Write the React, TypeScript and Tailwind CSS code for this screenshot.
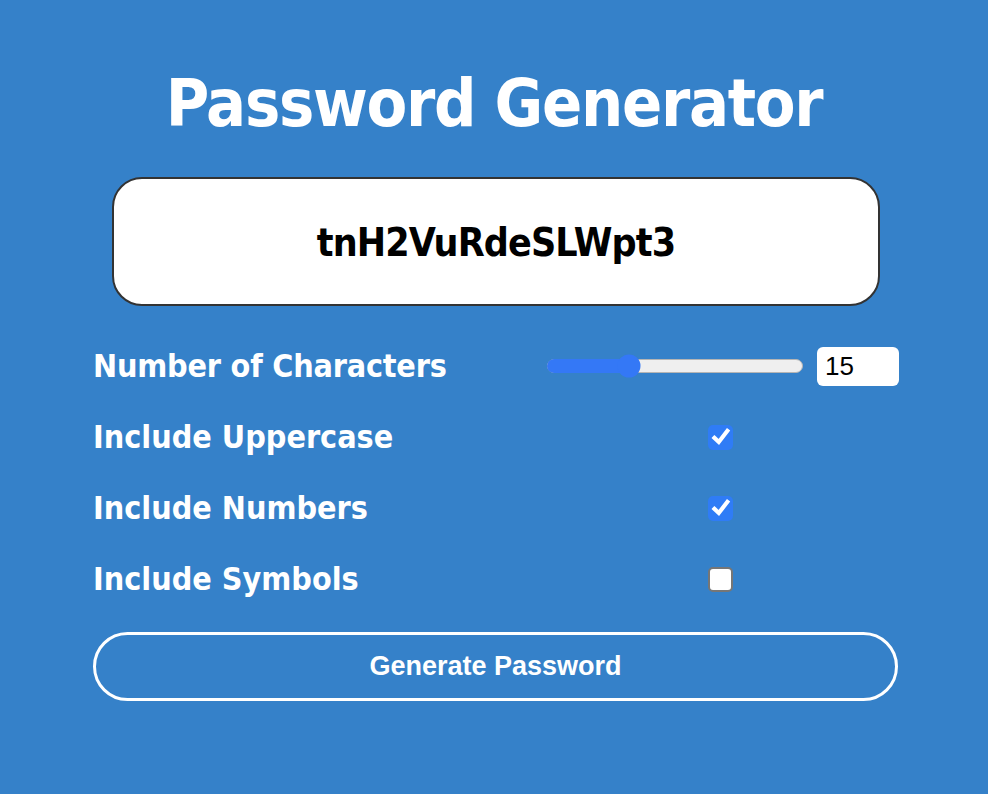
import { useState } from 'react';

const tahoma = "font-['DejaVu_Sans_Condensed','DejaVu_Sans',sans-serif] font-bold";

export default function App() {
  const [length, setLength] = useState(15);
  const [upper, setUpper] = useState(true);
  const [numbers, setNumbers] = useState(true);
  const [symbols, setSymbols] = useState(false);

  const min = 1;
  const max = 45;
  const pct = ((length - min) / (max - min)) * 100;

  return (
    <div className="min-h-screen bg-[#3581c9] text-white">
      <div className="flex flex-col items-center pt-[64px]">
        <h1 className={`${tahoma} text-[66px] leading-[80px] tracking-[-1.3px] text-white`}>Password Generator</h1>

        <div className="w-[806px] ml-[4px] mt-[33px] flex flex-col">
          <div className="mx-[19px] h-[129px] rounded-[30px] border-2 border-[#333] bg-white flex items-center justify-center pt-[4px]">
            <span className={`${tahoma} text-[39px] tracking-[-0.9px] text-black`}>tnH2VuRdeSLWpt3</span>
          </div>

          <div className="mt-[40px] flex items-center h-[40px]">
            <span className={`${tahoma} text-[32px] tracking-[-0.2px] w-[454px]`}>Number of Characters</span>
            <div className="relative w-[256px] h-[14px] rounded-full bg-[#efefef] border border-[#b5b5b5]">
              <div className="absolute left-[-1px] top-[-1px] h-[14px] rounded-full bg-[#3478f6]" style={{ width: `${pct}%` }} />
              <div
                className="absolute top-1/2 w-[23px] h-[23px] -translate-y-1/2 -translate-x-1/2 rounded-full bg-[#3478f6]"
                style={{ left: `${pct}%` }}
              />
            </div>
            <input
              type="number"
              value={length}
              onChange={(e) => setLength(Number(e.target.value))}
              className="ml-[14px] w-[82px] h-[39px] rounded-[6px] bg-white text-black pl-[8px] !text-[26px] font-['Liberation_Sans',Arial,sans-serif] outline-none"
            />
          </div>

          {[
            { label: 'Include Uppercase', on: upper, set: setUpper },
            { label: 'Include Numbers', on: numbers, set: setNumbers },
            { label: 'Include Symbols', on: symbols, set: setSymbols },
          ].map((row) => (
            <div key={row.label} className="mt-[31px] flex items-center h-[40px]">
              <span className={`${tahoma} text-[32px] w-[615px]`}>{row.label}</span>
              <button
                onClick={() => row.set(!row.on)}
                className={`w-[25px] h-[25px] rounded-[5px] flex items-center justify-center ${
                  row.on ? 'bg-[#2f7cf6]' : 'bg-white border-2 border-[#767676]'
                }`}
              >
                {row.on && (
                  <svg width="22" height="22" viewBox="0 0 16 16">
                    <path d="M3.2 8.6 L6.4 11.6 L12.6 3.6" fill="none" stroke="white" strokeWidth="3" strokeLinecap="square" strokeLinejoin="miter" />
                  </svg>
                )}
              </button>
            </div>
          ))}

          <button className="mt-[33px] h-[69px] w-[805px] rounded-full border-[3px] border-white text-white font-['Liberation_Sans',Arial,sans-serif] font-bold text-[27px]">
            Generate Password
          </button>
        </div>
      </div>
    </div>
  );
}
